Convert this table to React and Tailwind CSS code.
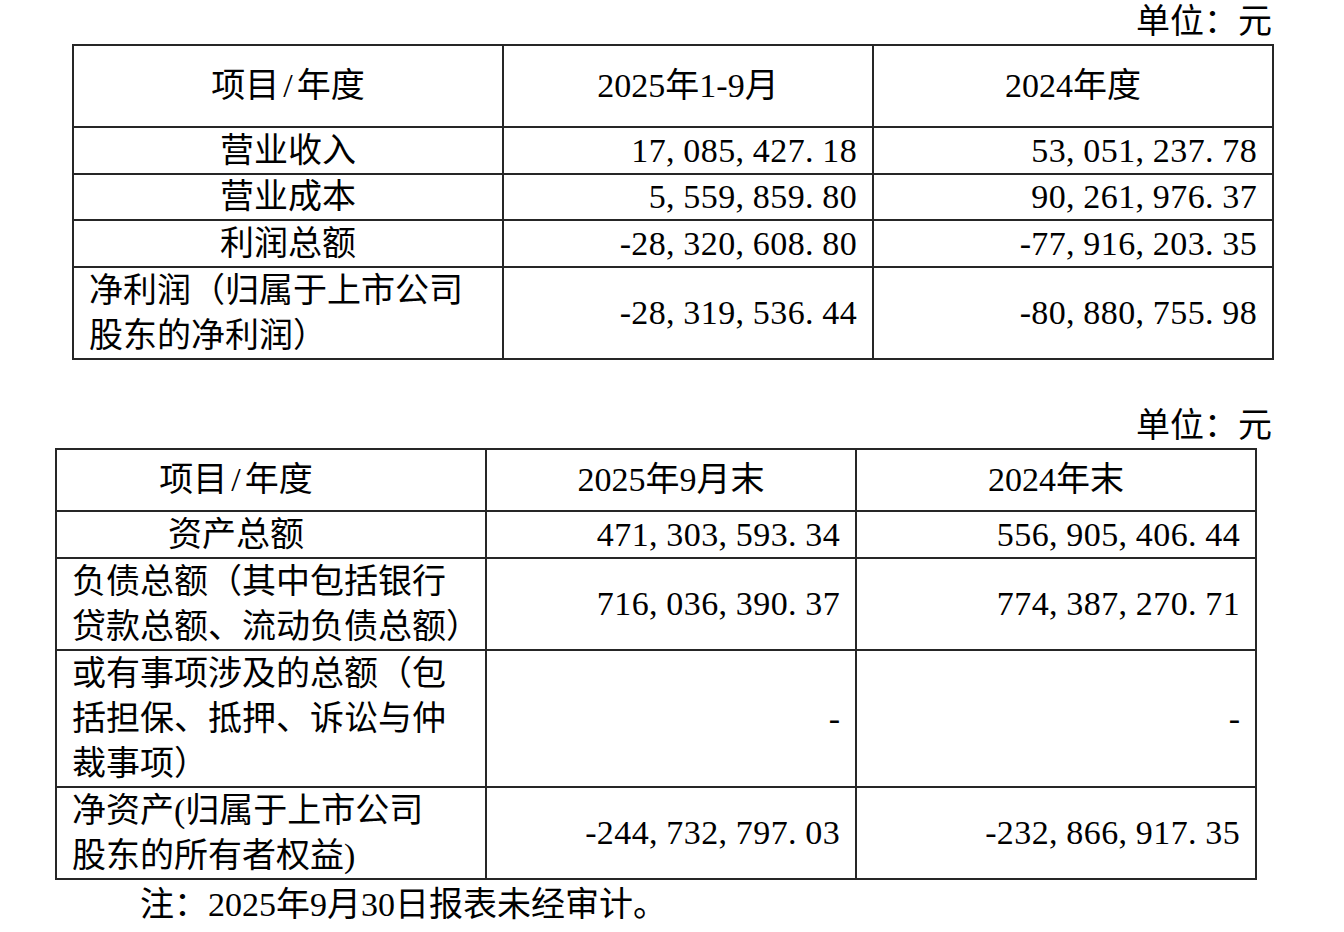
const font = { fontFamily: '"Liberation Serif", "Noto Sans CJK SC", serif' };

function Num({ v }) {
  return (
    <span className="whitespace-nowrap">
      {v.split('').map((c, i) =>
        c === ',' || c === '.' ? (
          <span key={i} className="inline-block w-[17px] text-left">{c}</span>
        ) : c === '-' ? (
          <span key={i} className="inline-block w-[17px] text-right">-</span>
        ) : (
          <span key={i} className="inline-block w-[17.5px] text-center">{c}</span>
        )
      )}
    </span>
  );
}

const cell = 'border-2 border-[#262626] align-middle p-0';

const incomeRows = [
  { label: '营业收入', a: '17,085,427.18', b: '53,051,237.78', h: 'h-[47px]' },
  { label: '营业成本', a: '5,559,859.80', b: '90,261,976.37', h: 'h-[46px]' },
  { label: '利润总额', a: '-28,320,608.80', b: '-77,916,203.35', h: 'h-[47px]' },
  { lines: ['净利润（归属于上市公司', '股东的净利润）'], a: '-28,319,536.44', b: '-80,880,755.98', h: 'h-[92px]' },
];

const balanceRows = [
  { label: '资产总额', a: '471,303,593.34', b: '556,905,406.44', h: 'h-[47px]' },
  { lines: ['负债总额（其中包括银行', '贷款总额、流动负债总额）'], a: '716,036,390.37', b: '774,387,270.71', h: 'h-[92px]' },
  { lines: ['或有事项涉及的总额（包', '括担保、抵押、诉讼与仲', '裁事项）'], a: '-', b: '-', h: 'h-[136px]' },
  { lines: ['净资产(归属于上市公司', '股东的所有者权益)'], a: '-244,732,797.03', b: '-232,866,917.35', h: 'h-[92px]' },
];

const Slash = () => <span className="mx-[4px]">/</span>;

function Label({ row, centerPad }) {
  if (row.lines) {
    return (
      <td className={`${cell} ${row.h} pl-[15px] text-left whitespace-nowrap`}>
        {row.lines.map((l, i) => (
          <div key={i} className="leading-[45px]">{l}</div>
        ))}
      </td>
    );
  }
  return <td className={`${cell} ${row.h} text-center ${centerPad}`}>{row.label}</td>;
}

function DataTable({ head, rows, headH, centerPad, className }) {
  return (
    <table className={`table-fixed border-collapse w-[1200px] ${className}`}>
      <colgroup>
        <col className="w-[430px]" />
        <col className="w-[370px]" />
        <col className="w-[400px]" />
      </colgroup>
      <tbody>
        <tr>
          <td className={`${cell} ${headH} text-center ${centerPad}`}>
            项目<Slash />年度
          </td>
          <td className={`${cell} text-center`}>{head[0]}</td>
          <td className={`${cell} text-center`}>{head[1]}</td>
        </tr>
        {rows.map((r, i) => (
          <tr key={i}>
            <Label row={r} centerPad={centerPad} />
            <td className={`${cell} text-right pr-[15px]`}>
              <Num v={r.a} />
            </td>
            <td className={`${cell} text-right pr-[15px]`}>
              <Num v={r.b} />
            </td>
          </tr>
        ))}
      </tbody>
    </table>
  );
}

export default function App() {
  return (
    <div className="w-[1344px] h-[932px] bg-white text-black overflow-hidden" style={font}>
      <div className="ml-[72px] w-[1200px] text-[34px] leading-[42px]">
        <div className="text-right leading-[44px]">单位：元</div>
        <DataTable
          head={['2025年1-9月', '2024年度']}
          rows={incomeRows}
          headH="h-[82px]"
          centerPad=""
        />
        <div className="h-[44px]" />
        <div className="text-right leading-[44px]">单位：元</div>
        <DataTable
          head={['2025年9月末', '2024年末']}
          rows={balanceRows}
          headH="h-[62px]"
          centerPad="pr-[70px]"
          className="-ml-[17px]"
        />
        <div className="pl-[68px] leading-[50px]">注：2025年9月30日报表未经审计。</div>
      </div>
    </div>
  );
}
